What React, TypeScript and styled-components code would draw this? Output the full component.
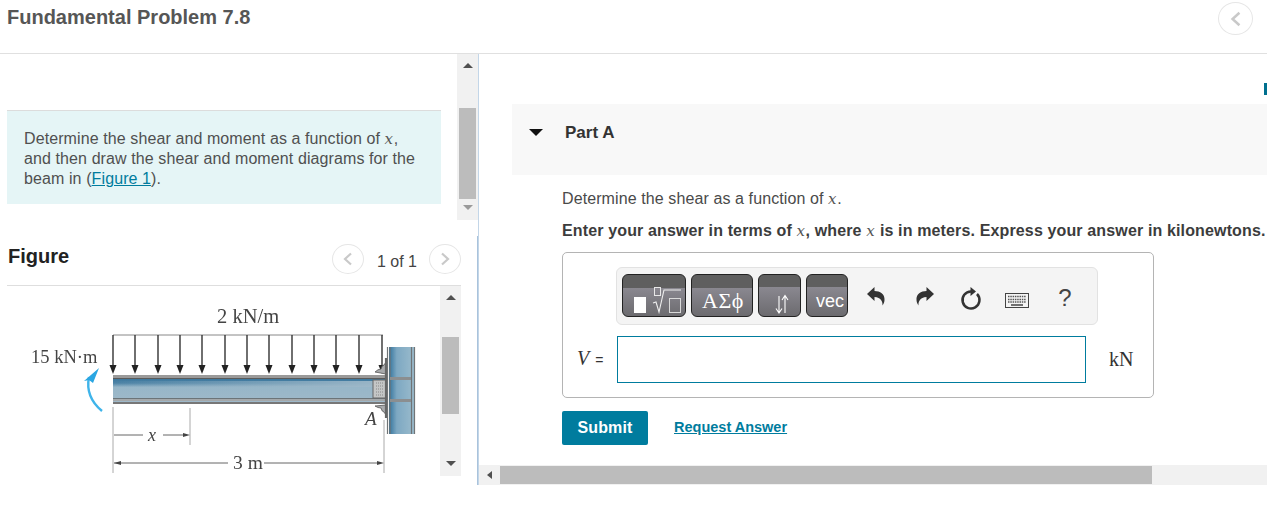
import React from "react";
import styled, { createGlobalStyle } from "styled-components";

const Global = createGlobalStyle`
  html, body { margin: 0; padding: 0; background: #fff; overflow: hidden; }
  body { font-family: "Liberation Sans", Arial, sans-serif; color: #333; }
`;

const Page = styled.div`
  width: 1267px;
  height: 507px;
  display: flex;
  flex-direction: column;
  overflow: hidden;
`;
const Header = styled.header`
  flex: none;
  box-sizing: border-box;
  border-bottom: 1px solid #e0e0e0;
  height: 54px;
  display: flex;
  justify-content: space-between;
  align-items: flex-start;
  padding: 2px 14px 0 7px;
`;
const Title = styled.h1`
  margin: 4px 0 0;
  font-size: 20px;
  line-height: 23px;
  font-weight: 700;
  color: #565656;
`;
const RoundNav = styled.button<{ $small?: boolean }>`
  width: ${(p) => (p.$small ? 32 : 35)}px;
  height: ${(p) => (p.$small ? 30 : 33)}px;
  flex: none;
  padding: 0;
  background: #fff;
  border: 1px solid #e6e6e6;
  border-radius: 50%;
  display: flex;
  align-items: center;
  justify-content: center;
`;
const Body = styled.main`
  display: flex;
  flex: 1;
  min-height: 0;
`;
const LeftPane = styled.section`
  width: 479px;
  height: 431px;
  flex: none;
  box-sizing: border-box;
  border-right: 1px solid #c3d6e8;
  display: flex;
  flex-direction: column;
`;
const TopPane = styled.div`
  height: 166px;
  flex: none;
  display: flex;
`;
const TopContent = styled.div`
  flex: 1;
  padding: 56px 16px 0 7px;
`;
const Prompt = styled.div`
  box-sizing: border-box;
  height: 94px;
  background: #e5f5f6;
  border-top: 1px solid #dcdcdc;
  padding: 18px 10px 0 17px;
  font-size: 16px;
  line-height: 20px;
  letter-spacing: 0.1px;
  color: #505050;
  white-space: nowrap;
`;
const MathVar = styled.i`
  font-family: "DejaVu Serif", "Liberation Serif", serif;
  font-size: 15px;
  font-weight: 400;
  letter-spacing: 0.6px;
  color: #555;
`;
const InlineLink = styled.a`
  color: #007c9e;
  text-decoration: underline;
`;
const VScroll = styled.div<{ $w: number }>`
  width: ${(p) => p.$w}px;
  flex: none;
  background: #f1f1f1;
  display: flex;
  flex-direction: column;
  align-items: center;
`;
const VArrowCell = styled.div<{ $h: number; $at: number }>`
  height: ${(p) => p.$h}px;
  box-sizing: border-box;
  padding-top: ${(p) => p.$at}px;
  flex: none;
`;
const Thumb = styled.div<{ $h: number }>`
  width: 17px;
  height: ${(p) => p.$h}px;
  background: #bcbcbc;
  flex: none;
`;
const Tri = styled.div<{ $dir: "up" | "down" | "left"; $c?: string }>`
  width: 0;
  height: 0;
  ${(p) => {
    const c = p.$c ?? "#505050";
    if (p.$dir === "up") return `border-left:5px solid transparent;border-right:5px solid transparent;border-bottom:5px solid ${c};`;
    if (p.$dir === "down") return `border-left:5px solid transparent;border-right:5px solid transparent;border-top:5px solid ${c};`;
    return `border-top:4px solid transparent;border-bottom:4px solid transparent;border-right:5px solid ${c};`;
  }}
`;
const FigurePane = styled.div`
  flex: 1;
  box-sizing: border-box;
  margin-top: 16px;
  border-right: 1px solid #a9c3dc;
  padding: 0 16px 0 7px;
  display: flex;
  flex-direction: column;
  min-height: 0;
`;
const FigureHeader = styled.div`
  height: 50px;
  flex: none;
  box-sizing: border-box;
  border-bottom: 1px solid #dedede;
  display: flex;
  align-items: flex-start;
`;
const FigureTitle = styled.h2`
  margin: 8px auto 0 1px;
  font-size: 20px;
  line-height: 24px;
  font-weight: 700;
  color: #222;
`;
const Pager = styled.div`
  display: flex;
  align-items: center;
  gap: 13px;
  margin-top: 8px;
  font-size: 16px;
  color: #444;
`;
const PagerText = styled.span`
  padding-top: 5px;
  margin-right: -1px;
`;
const FigureBody = styled.div`
  display: flex;
  height: 190px;
`;
const FigureSvg = styled.svg`
  width: 433px;
  height: 190px;
  display: block;
  flex: none;
  filter: blur(0.35px);
`;
const RightPane = styled.section`
  flex: 1;
  min-width: 0;
  display: flex;
  flex-direction: column;
  height: 431px;
  overflow: hidden;
`;
const RightScrollArea = styled.div`
  height: 411px;
  flex: none;
  overflow: hidden;
`;
const TickRow = styled.div`
  height: 50px;
  display: flex;
  justify-content: flex-end;
  align-items: flex-start;
`;
const Tick = styled.div`
  width: 3px;
  height: 12px;
  margin-top: 29px;
  background: #00708f;
`;
const PartHeader = styled.div`
  margin-left: 33px;
  height: 71px;
  background: #f8f8f8;
  display: flex;
  align-items: flex-start;
  padding: 19px 0 0 17px;
  box-sizing: border-box;
`;
const Caret = styled.div`
  width: 0;
  height: 0;
  margin-top: 6px;
  border-left: 7px solid transparent;
  border-right: 7px solid transparent;
  border-top: 7px solid #111;
`;
const PartTitle = styled.h3`
  margin: 0 0 0 22px;
  font-size: 17px;
  line-height: 20px;
  font-weight: 700;
  color: #333;
`;
const PartBody = styled.div`
  padding: 14px 0 0 83px;
`;
const Line = styled.p<{ $bold?: boolean; $top: number }>`
  margin: ${(p) => p.$top}px 0 0;
  font-size: 16px;
  line-height: 20px;
  font-weight: ${(p) => (p.$bold ? 700 : 400)};
  letter-spacing: ${(p) => (p.$bold ? 0.14 : 0.1)}px;
  color: ${(p) => (p.$bold ? "#3c3c3c" : "#4a4a4a")};
  white-space: nowrap;
`;
const AnswerBox = styled.div`
  box-sizing: border-box;
  width: 592px;
  height: 146px;
  margin-top: 11px;
  border: 1px solid #b4b4b4;
  border-radius: 5px;
  padding: 14px 0 0 14px;
`;
const Toolbar = styled.div`
  box-sizing: border-box;
  width: 482px;
  height: 58px;
  margin-left: 39px;
  background: #f4f4f4;
  border: 1px solid #e2e2e2;
  border-radius: 6px;
  display: flex;
  align-items: flex-start;
  padding: 6px 0 0 5px;
`;
const ToolButton = styled.div<{ $w: number; $band: number; $gap: number }>`
  box-sizing: border-box;
  width: ${(p) => p.$w}px;
  height: 43px;
  margin-right: ${(p) => p.$gap}px;
  border: 1px solid #222;
  border-radius: 6px;
  color: #fff;
  overflow: hidden;
  background: linear-gradient(
    to bottom,
    #5f5f5f 0,
    #5f5f5f ${(p) => p.$band}px,
    #8a8890 ${(p) => p.$band}px,
    #6c6b6f 100%
  );
  display: flex;
  align-items: flex-end;
  justify-content: center;
`;
const GreekLabel = styled.span`
  font-family: "Liberation Serif", serif;
  font-size: 22px;
  line-height: 30px;
  padding-left: 2px;
  letter-spacing: 0.6px;
  white-space: nowrap;
`;
const VecLabel = styled.span`
  font-size: 18px;
  line-height: 29px;
  padding-left: 6px;
`;
const ToolIcon = styled.div<{ $w: number; $l: number; $dy: number }>`
  width: ${(p) => p.$w}px;
  margin-left: ${(p) => p.$l}px;
  margin-top: ${(p) => p.$dy}px;
  height: 43px;
  flex: none;
  display: flex;
  align-items: center;
  justify-content: center;
  color: #333;
`;
const HelpGlyph = styled.span`
  font-size: 24px;
  color: #444;
`;
const InputRow = styled.div`
  display: flex;
  align-items: flex-start;
  margin-top: 11px;
`;
const VarLabel = styled.div`
  width: 40px;
  padding-top: 11px;
  font-family: "Liberation Serif", serif;
  font-size: 20px;
  line-height: 22px;
  color: #333;
  white-space: nowrap;
`;
const VarEq = styled.span`
  font-family: "Liberation Sans", sans-serif;
  font-style: normal;
  font-size: 14px;
  margin-left: 6px;
`;
const AnswerInput = styled.div`
  box-sizing: border-box;
  width: 469px;
  height: 47px;
  border: 1px solid #007c9e;
  background: #fff;
`;
const Unit = styled.div`
  margin-left: 23px;
  padding-top: 12px;
  font-family: "Liberation Serif", serif;
  font-size: 20px;
  line-height: 22px;
  color: #333;
`;
const Actions = styled.div`
  display: flex;
  align-items: center;
  margin-top: 13px;
`;
const Submit = styled.button`
  width: 86px;
  height: 34px;
  border: 0;
  padding: 0;
  border-radius: 2px;
  background: #007c9e;
  color: #fff;
  font: 700 16px "Liberation Sans", sans-serif;
  letter-spacing: 0.1px;
`;
const RequestLink = styled.a`
  margin-left: 26px;
  margin-top: -2px;
  font-size: 14.5px;
  font-weight: 700;
  color: #007c9e;
  text-decoration: underline;
`;
const HScroll = styled.div`
  height: 20px;
  flex: none;
  background: #f1f1f1;
  display: flex;
  align-items: center;
`;
const HArrowCell = styled.div`
  width: 21px;
  flex: none;
  display: flex;
  justify-content: center;
`;
const HThumb = styled.div`
  width: 652px;
  height: 18px;
  background: #bcbcbc;
`;

const Chevron = ({ dir, size = 14 }: { dir: "l" | "r"; size?: number }) => (
  <svg width={size} height={size} viewBox="0 0 14 14" fill="none">
    <path d={dir === "l" ? "M10 1.5 4 7l6 5.5" : "M4 1.5 10 7l-6 5.5"} stroke="#c9c9c9" strokeWidth="2.2" />
  </svg>
);

const arrowXs = [113, 135, 158, 180, 202, 225, 247, 269, 292, 314, 336, 359, 382];

const BeamFigure = () => (
  <FigureSvg viewBox="7 286 433 190">
    <defs>
      <linearGradient id="web" x1="0" y1="0" x2="0" y2="1">
        <stop offset="0" stopColor="#2f6e96" />
        <stop offset="0.28" stopColor="#4d83a6" />
        <stop offset="0.42" stopColor="#97b6c8" />
        <stop offset="1" stopColor="#9fb9c9" />
      </linearGradient>
      <linearGradient id="webFade" x1="0" y1="0" x2="1" y2="0">
        <stop offset="0" stopColor="#9fb9c9" stopOpacity="0" />
        <stop offset="1" stopColor="#9fb9c9" stopOpacity="0.95" />
      </linearGradient>
      <linearGradient id="column" x1="0" y1="0" x2="1" y2="0">
        <stop offset="0" stopColor="#33739c" />
        <stop offset="0.3" stopColor="#7da8c2" />
        <stop offset="1" stopColor="#9cbccd" />
      </linearGradient>
    </defs>
    <g fontFamily="'Liberation Serif', serif" fill="#444">
      <text x="217" y="323" fontSize="20.5">2 kN/m</text>
      <text x="31" y="363" fontSize="18.5">15 kN·m</text>
      <text x="233" y="469" fontSize="19.5">3 m</text>
      <text x="148" y="441" fontSize="18" fontStyle="italic">x</text>
      <text x="365" y="425" fontSize="19" fontStyle="italic">A</text>
    </g>
    <path d="M113 335H383" stroke="#888" strokeWidth="1" />
    {arrowXs.map((x) => (
      <g key={x}>
        <path d={`M${x} 335V367`} stroke="#333" strokeWidth="1.4" />
        <path d={`M${x - 3.5} 365h7l-3.5 9z`} fill="#222" />
      </g>
    ))}
    <rect x="113" y="375" width="274" height="29" fill="url(#web)" />
    <rect x="113" y="381" width="270" height="6" fill="url(#webFade)" />
    <rect x="113" y="375" width="274" height="3" fill="#9a9a9a" />
    <rect x="113" y="378" width="274" height="1" fill="#5a5a5a" />
    <rect x="113" y="398" width="274" height="1" fill="#6c7478" />
    <rect x="113" y="399" width="274" height="2" fill="#a4a8aa" />
    <rect x="113" y="402" width="274" height="2" fill="#777" />
    <path d="M375 372q3-3 6-3 1-4 3-4l2-3 0 12zM375 406q3 2 6 2 1 4 3 4l2 3 0-10z" fill="#a8aaac" stroke="#555" strokeWidth="0.8" />
    <rect x="373" y="380" width="13" height="18" fill="#c4c6c6" stroke="#666" strokeWidth="1" />
    <path d="M376 383h7M376 386h7M376 389h7M376 392h7M376 395h7" stroke="#888" strokeWidth="1" strokeDasharray="1 1" />
    <path d="M386 358V418" stroke="#666" strokeWidth="2.2" />
    <rect x="389" y="347" width="26" height="87" fill="url(#column)" />
    <path d="M387.5 347V434M390 347V434M411.500 347V434M414.500 347V434" stroke="#707476" strokeWidth="1.2" />
    <rect x="390" y="377" width="21" height="3" fill="#8b8e90" />
    <rect x="390" y="399" width="21" height="3" fill="#8b8e90" />
    <path d="M102 411Q85 397 89 377" fill="none" stroke="#3fb4ea" strokeWidth="2.400" />
    <path d="M99 368 84 381l5-1 4 3z" fill="#2aa6e2" />
    <path d="M113 407V473M190 408V445M384 420V473" stroke="#aaa" strokeWidth="1" />
    <path d="M114 435H143M163 435H186" stroke="#666" strokeWidth="1" />
    <path d="M190 435l-7-2v4z" fill="#444" />
    <path d="M114 463H228M264 463H380" stroke="#666" strokeWidth="1" />
    <path d="M114 463l7-2v4zM384 463l-7-2v4z" fill="#444" />
  </FigureSvg>
);

const MathKeys = () => (
  <svg width="60" height="40" viewBox="0 0 60 40" fill="none">
    <rect x="10" y="21" width="12" height="16" fill="#fff" />
    <rect x="30.500" y="11.500" width="6" height="8" stroke="#e8e8e8" strokeWidth="1" />
    <path d="M29 27l3-1 3 10 5-22h17" stroke="#eee" strokeWidth="1.100" />
    <rect x="45.500" y="22.500" width="11" height="14" stroke="#d8d8d8" strokeWidth="1" />
  </svg>
);

const SortArrows = () => (
  <svg width="22" height="24" viewBox="0 0 22 24" fill="none" stroke="#fff" strokeWidth="1.100">
    <path d="M10 4V20M7 16.500 10 21l3-4.500" />
    <path d="M16 21V4M13 8l3-4.500 3 4.500" />
  </svg>
);

const ReplyArrow = ({ flip }: { flip?: boolean }) => (
  <svg width="18" height="19" viewBox="0 0 18 19" fill="#333">
    <path
      transform={flip ? "matrix(-1 0 0 1 18 0)" : undefined}
      d="M0 7 7.500 0V4C13 4 18 7 17.500 13 17.500 15 16.500 17 15.500 18.500 15.800 14.500 14 10.500 7.500 10V14Z"
    />
  </svg>
);

const Reset = () => (
  <svg width="24" height="26" viewBox="0 -2 24 26" fill="none">
    <path d="M18 6A8.500 8.500 0 1 1 12 3.500" stroke="#333" strokeWidth="2.500" />
    <path d="M11.500-1V8L17 3.500z" fill="#333" />
  </svg>
);

const KeyboardIcon = () => (
  <svg width="24" height="15" viewBox="0 0 24 15" fill="none">
    <rect x="0.500" y="0.500" width="23" height="14" stroke="#444" fill="#f4f4f4" />
    <path d="M3 3.500h18M3 6.500h18M3 9h18" stroke="#555" strokeWidth="1.300" strokeDasharray="1.500 0.800" />
    <path d="M6 12h12" stroke="#444" strokeWidth="1.500" />
  </svg>
);

export default function App() {
  return (
    <Page>
      <Global />
      <Header>
        <Title>Fundamental Problem 7.8</Title>
        <RoundNav aria-label="Back"><Chevron dir="l" size={16} /></RoundNav>
      </Header>
      <Body>
        <LeftPane>
          <TopPane>
            <TopContent>
              <Prompt>
                Determine the shear and moment as a function of <MathVar>x</MathVar>,<br />
                and then draw the shear and moment diagrams for the<br />
                beam in (<InlineLink href="#">Figure 1</InlineLink>).
              </Prompt>
            </TopContent>
            <VScroll $w={21}>
              <VArrowCell $h={54} $at={9}><Tri $dir="up" /></VArrowCell>
              <Thumb $h={91} />
              <VArrowCell $h={21} $at={6}><Tri $dir="down" $c="#9a9a9a" /></VArrowCell>
            </VScroll>
          </TopPane>
          <FigurePane>
            <FigureHeader>
              <FigureTitle>Figure</FigureTitle>
              <Pager>
                <RoundNav $small aria-label="Previous"><Chevron dir="l" /></RoundNav>
                <PagerText>1 of 1</PagerText>
                <RoundNav $small aria-label="Next"><Chevron dir="r" /></RoundNav>
              </Pager>
            </FigureHeader>
            <FigureBody>
              <BeamFigure />
              <VScroll $w={21}>
                <VArrowCell $h={51} $at={9}><Tri $dir="up" /></VArrowCell>
                <Thumb $h={77} />
                <VArrowCell $h={62} $at={47}><Tri $dir="down" /></VArrowCell>
              </VScroll>
            </FigureBody>
          </FigurePane>
        </LeftPane>
        <RightPane>
          <RightScrollArea>
            <TickRow><Tick /></TickRow>
            <PartHeader>
              <Caret />
              <PartTitle>Part A</PartTitle>
            </PartHeader>
            <PartBody>
              <Line $top={0}>Determine the shear as a function of <MathVar>x</MathVar>.</Line>
              <Line $bold $top={12}>
                Enter your answer in terms of <MathVar>x</MathVar>, where <MathVar>x</MathVar> is in meters. Express your answer in kilonewtons.
              </Line>
              <AnswerBox>
                <Toolbar>
                  <ToolButton $w={64} $band={13} $gap={5}><MathKeys /></ToolButton>
                  <ToolButton $w={62} $band={13} $gap={5}><GreekLabel>ΑΣϕ</GreekLabel></ToolButton>
                  <ToolButton $w={43} $band={12} $gap={5}><SortArrows /></ToolButton>
                  <ToolButton $w={42} $band={12} $gap={0}><VecLabel>vec</VecLabel></ToolButton>
                  <ToolIcon $w={18} $l={19} $dy={1}><ReplyArrow /></ToolIcon>
                  <ToolIcon $w={18} $l={31} $dy={1}><ReplyArrow flip /></ToolIcon>
                  <ToolIcon $w={24} $l={25} $dy={3}><Reset /></ToolIcon>
                  <ToolIcon $w={24} $l={22} $dy={5}><KeyboardIcon /></ToolIcon>
                  <ToolIcon $w={14} $l={29} $dy={2}><HelpGlyph>?</HelpGlyph></ToolIcon>
                </Toolbar>
                <InputRow>
                  <VarLabel><i>V</i><VarEq>=</VarEq></VarLabel>
                  <AnswerInput />
                  <Unit>kN</Unit>
                </InputRow>
              </AnswerBox>
              <Actions>
                <Submit>Submit</Submit>
                <RequestLink href="#">Request Answer</RequestLink>
              </Actions>
            </PartBody>
          </RightScrollArea>
          <HScroll>
            <HArrowCell><Tri $dir="left" /></HArrowCell>
            <HThumb />
          </HScroll>
        </RightPane>
      </Body>
    </Page>
  );
}
